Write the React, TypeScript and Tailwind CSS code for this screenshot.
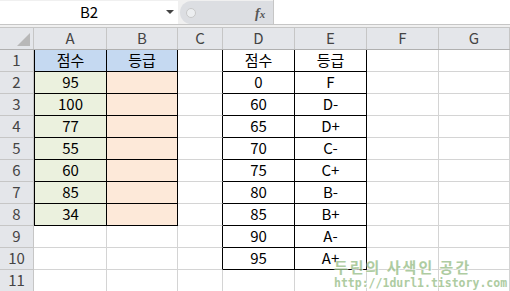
const cols = ['A', 'B', 'C', 'D', 'E', 'F', 'G']
const widths = [73, 71, 45, 72, 72, 72, 71]

const cells: Record<string, string> = {
  A1: '점수', B1: '등급',
  A2: '95', A3: '100', A4: '77', A5: '55', A6: '60', A7: '85', A8: '34',
  D1: '점수', E1: '등급',
  D2: '0', E2: 'F', D3: '60', E3: 'D-', D4: '65', E4: 'D+', D5: '70', E5: 'C-',
  D6: '75', E6: 'C+', D7: '80', E7: 'B-', D8: '85', E8: 'B+', D9: '90', E9: 'A-',
  D10: '95', E10: 'A+',
}

const ranges = [
  { c1: 0, c2: 1, r1: 1, r2: 8 },
  { c1: 3, c2: 4, r1: 1, r2: 10 },
]

const inRange = (c: number, r: number) =>
  ranges.some(g => c >= g.c1 && c <= g.c2 && r >= g.r1 && r <= g.r2)

const fill = (c: number, r: number) => {
  if (r === 1 && c <= 1) return 'bg-[#c5d9f1]'
  if (c === 0 && r >= 2 && r <= 8) return 'bg-[#ebf1de]'
  if (c === 1 && r >= 2 && r <= 8) return 'bg-[#fde9d9]'
  return 'bg-white'
}

const Cell = ({ c, r }: { c: number; r: number }) => {
  const right = inRange(c, r) || inRange(c + 1, r) ? 'border-r-black' : 'border-r-[#d4d4d4]'
  const bottom = inRange(c, r) || inRange(c, r + 1) ? 'border-b-black' : 'border-b-[#d4d4d4]'
  const left = c === 0 && inRange(c, r) ? 'border-l border-l-black' : ''
  return (
    <div
      className={`h-[22px] flex items-center justify-center border-r border-b text-[15px] text-black ${right} ${bottom} ${left} ${fill(c, r)}`}
      style={{ width: widths[c] }}
    >
      {cells[cols[c] + r]}
    </div>
  )
}

export default function App() {
  const rows = [1, 2, 3, 4, 5, 6, 7, 8, 9, 10, 11]
  return (
    <div
      className="relative w-[510px] h-[291px] overflow-hidden bg-white"
      style={{ fontFamily: '"Noto Sans CJK KR", "Noto Sans", sans-serif' }}
    >
      {/* formula bar */}
      <div className="flex h-[25px] border-b border-[#c6c6c6] bg-[#f0f0f0]">
        <div className="w-[178px] h-[23px] mt-[1px] bg-white flex items-center relative">
          <span className="w-full text-center text-[15px] text-black">B2</span>
          <span className="absolute left-[166px] top-[9px] w-0 h-0 border-l-[4px] border-r-[4px] border-t-[4px] border-l-transparent border-r-transparent border-t-[#444]" />
        </div>
        <div className="w-[93px] h-[23px] mt-[1px] ml-[2px] rounded-l-full bg-[#dcdee2] flex items-center relative">
          <span className="ml-[6px] w-[10px] h-[10px] rounded-full bg-[#eceef0] border border-[#c8c8c8]" />
          <span
            className="absolute left-[75px] top-[2px] text-[14px] italic font-bold text-[#555]"
            style={{ fontFamily: '"Liberation Serif", serif' }}
          >
            f<span className="text-[11px]">x</span>
          </span>
        </div>
        <div className="flex-1 h-[24px] bg-white border-l border-[#c6c6c6]" />
      </div>
      <div className="h-[3px] bg-[#f0f0f0] border-b border-[#c6c6c6]" />

      {/* column headers */}
      <div className="flex h-[22px] bg-[#e4e6ea] border-b border-[#b0b0b0]">
        <div className="w-[34px] border-r border-[#c6c6c6] relative">
          <svg className="absolute right-[3px] bottom-[3px]" width="13" height="13" viewBox="0 0 13 13">
            <polygon points="13,0 13,13 0,13" fill="#b8b8b8" />
          </svg>
        </div>
        {cols.map((c, i) => (
          <div
            key={c}
            className="flex items-center justify-center border-r border-[#c6c6c6] text-[15px] text-[#444]"
            style={{ width: widths[i] }}
          >
            {c}
          </div>
        ))}
      </div>

      {/* rows */}
      {rows.map(r => (
        <div key={r} className="flex">
          <div className="w-[34px] h-[22px] flex items-center justify-center bg-[#e4e6ea] border-r border-b border-[#c6c6c6] text-[15px] text-[#444]">
            {r}
          </div>
          {cols.map((c, i) => (
            <Cell key={c} c={i} r={r} />
          ))}
        </div>
      ))}

      {/* watermark */}
      <div className="absolute left-[334px] top-[259px] leading-none opacity-80">
        <div
          className="text-[15px] font-bold text-[#9ac08a] tracking-[2px]"
          style={{ textShadow: '0 0 2px #fff, 1px 1px 0 #fff' }}
        >
          두린의 사색인 공간
        </div>
        <div
          className="text-[11.5px] font-bold text-[#9ac08a] mt-[4px]"
          style={{ fontFamily: '"DejaVu Sans Mono", monospace', textShadow: '0 0 2px #fff, 1px 1px 0 #fff' }}
        >
          http://1durl1.tistory.com
        </div>
      </div>
    </div>
  )
}
